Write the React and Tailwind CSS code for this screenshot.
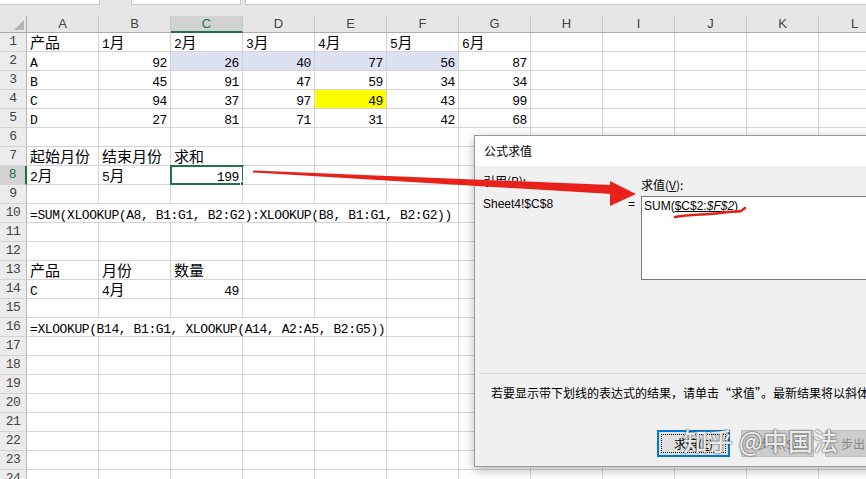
import React from 'react'

const COLS = ['A', 'B', 'C', 'D', 'E', 'F', 'G', 'H', 'I', 'J', 'K', 'L']

// span -> width class (72px per column)
const W = { 1: 'w-[72px]', 5: 'w-[360px]', 6: 'w-[432px]' }

const TONE = {
  blue: 'bg-[#dce2f1]',
  yellow: 'bg-[#ffff00]',
}

const n = (t, tone) => ({ t, r: true, tone })

const ROWS = {
  1: [{ t: '产品' }, { t: '1月' }, { t: '2月' }, { t: '3月' }, { t: '4月' }, { t: '5月' }, { t: '6月' }],
  2: [{ t: 'A' }, n('92'), n('26', 'blue'), n('40', 'blue'), n('77', 'blue'), n('56', 'blue'), n('87')],
  3: [{ t: 'B' }, n('45'), n('91'), n('47'), n('59'), n('34'), n('34')],
  4: [{ t: 'C' }, n('94'), n('37'), n('97'), n('49', 'yellow'), n('43'), n('99')],
  5: [{ t: 'D' }, n('27'), n('81'), n('71'), n('31'), n('42'), n('68')],
  7: [{ t: '起始月份' }, { t: '结束月份' }, { t: '求和' }],
  8: [{ t: '2月' }, { t: '5月' }, { t: '199', r: true, sel: true }],
  10: [{ t: '=SUM(XLOOKUP(A8, B1:G1, B2:G2):XLOOKUP(B8, B1:G1, B2:G2))', span: 6 }],
  13: [{ t: '产品' }, { t: '月份' }, { t: '数量' }],
  14: [{ t: 'C' }, { t: '4月' }, n('49')],
  16: [{ t: '=XLOOKUP(B14, B1:G1, XLOOKUP(A14, A2:A5, B2:G5))', span: 5 }],
}

// ascii runs get the narrow mono face, the rest stays CJK
function Txt({ s }) {
  const parts = s.split(/([\x00-\x7f]+)/).filter(Boolean)
  return parts.map((p, i) =>
    /^[\x00-\x7f]+$/.test(p) ? (
      <span key={i} className="font-['Liberation_Mono',monospace] text-[13px] tracking-[-0.4px]">
        {p}
      </span>
    ) : (
      <span key={i}>{p}</span>
    )
  )
}

function Cell({ c }) {
  const span = c.span || 1
  return (
    <div
      className={`relative shrink-0 h-full border-r border-b border-[#d4d4d4] leading-[18px] whitespace-nowrap px-[3px] ${W[span]} ${
        c.r ? 'text-right' : 'text-left'
      } ${c.tone ? TONE[c.tone] : 'bg-white'}`}
    >
      {c.t && <Txt s={c.t} />}
      {c.sel && (
        <div className="absolute -left-px -top-px w-[74px] h-[20px] border-2 border-[#217346]">
          <div className="absolute -right-[4px] -bottom-[4px] w-[6px] h-[6px] bg-[#217346] border border-white" />
        </div>
      )}
    </div>
  )
}

function Row({ num }) {
  const cells = ROWS[num] || []
  const used = cells.reduce((a, c) => a + (c.span || 1), 0)
  const rest = Array.from({ length: 12 - used })
  const active = num === 8
  return (
    <div className="flex h-[19px] shrink-0">
      <div
        className={`w-[27px] shrink-0 flex items-center justify-center border-b border-[#d4d4d4] font-['Liberation_Mono',monospace] text-[13px] tracking-[-0.5px] ${
          active
            ? 'bg-[#d2d2d2] border-r-2 border-r-[#217346] text-[#217346]'
            : 'bg-[#ececec] border-r border-r-[#b8b8b8] text-[#444]'
        }`}
      >
        {num}
      </div>
      {cells.map((c, i) => (
        <Cell key={i} c={c} />
      ))}
      {rest.map((_, i) => (
        <Cell key={'e' + i} c={{}} />
      ))}
    </div>
  )
}

function Sheet() {
  return (
    <div className="flex flex-col">
      <div className="h-[16px] bg-[#e6e6e6] flex items-start shrink-0">
        <div className="w-[100px] h-[5px] bg-white border-b border-r border-[#c6c6c6]" />
        <div className="w-[31px]" />
        <div className="w-[110px] h-[5px] bg-white border-b border-x border-[#c6c6c6]" />
        <div className="w-[4px]" />
        <div className="flex-1 h-[5px] bg-white border-b border-l border-[#c6c6c6]" />
      </div>
      <div className="flex h-[17px] shrink-0 font-['Liberation_Sans',sans-serif] text-[13px]">
        <div className="w-[27px] shrink-0 bg-[#e6e6e6] border-r border-b border-[#ababab] flex items-end justify-end p-[2px]">
          <svg width="10" height="10" viewBox="0 0 10 10">
            <polygon points="10,0 10,10 0,10" fill="#b4b4b4" />
          </svg>
        </div>
        {COLS.map((l) => (
          <div
            key={l}
            className={`w-[72px] shrink-0 flex items-center justify-center border-r border-[#c8c8c8] ${
              l === 'C'
                ? 'bg-[#d2d2d2] border-b-2 border-b-[#217346] text-[#217346]'
                : 'bg-[#e6e6e6] border-b border-b-[#ababab] text-[#444]'
            }`}
          >
            {l}
          </div>
        ))}
      </div>
      {Array.from({ length: 24 }, (_, i) => (
        <Row key={i} num={i + 1} />
      ))}
    </div>
  )
}

function Dialog() {
  return (
    <div className="absolute left-[474px] top-[135px] w-[420px] h-[332px] bg-[#f0f0f0] border border-[#9a9a9a] shadow-[0_3px_10px_rgba(0,0,0,0.28)] font-['Noto_Sans_CJK_SC',sans-serif] text-[12px] text-black flex flex-col">
      <div className="h-[30px] bg-white flex items-center pl-[9px] shrink-0">公式求值</div>
      <div className="flex pl-[8px] shrink-0">
        <div className="w-[145px] shrink-0 flex flex-col">
          <div className="mt-[7px] leading-[16px]">
            引用(<span className="underline">R</span>):
          </div>
          <div className="mt-[7px] leading-[16px] font-['Liberation_Sans',sans-serif]">Sheet4!$C$8</div>
        </div>
        <div className="w-[13px] shrink-0 mt-[30px] leading-[16px] font-['Liberation_Sans',sans-serif]">=</div>
        <div className="flex flex-col shrink-0">
          <div className="mt-[11px] leading-[16px]">
            求值(<span className="underline">V</span>):
          </div>
          <div className="mt-[3px] w-[260px] h-[84px] bg-white border border-[#7a7a7a] px-[2px] pt-[1px] leading-[16px] font-['Liberation_Sans',sans-serif]">
            SUM(<span className="underline">$C$2:</span>
            <span className="underline italic">$F$2</span>)
          </div>
        </div>
      </div>
      <div className="mt-[93px] ml-[6px] border-t border-[#d6d6d6] shrink-0" />
      <div className="mt-[11px] pl-[16px] leading-[16px] whitespace-nowrap shrink-0">
        若要显示带下划线的表达式的结果，请单击“求值”。最新结果将以斜体显示。
      </div>
      <div className="mt-[29px] pl-[182px] flex gap-[11px] shrink-0">
        <div className="relative shrink-0 w-[73px] h-[27px] bg-[#e1e1e1] border-2 border-[#0078d7] flex items-center justify-center">
          <span className="absolute inset-[2px] border border-dotted border-black" />
          求值(<span className="underline">E</span>)
        </div>
        <div className="shrink-0 w-[73px] h-[27px] bg-[#cccccc] border border-[#bfbfbf] flex items-center justify-center text-[#8a8a8a]">
          步入(S)
        </div>
        <div className="shrink-0 w-[73px] h-[27px] bg-[#cccccc] border border-[#bfbfbf] flex items-center justify-center text-[#8a8a8a]">
          步出(O)
        </div>
      </div>
    </div>
  )
}

export default function App() {
  return (
    <div className="relative w-[866px] h-[479px] overflow-hidden bg-white font-['Noto_Sans_CJK_SC',sans-serif] text-[15px] text-black">
      <Sheet />
      <Dialog />
      <svg className="absolute left-0 top-0 pointer-events-none" width="866" height="479" viewBox="0 0 866 479">
        {/* arrow from C8 to the evaluate box */}
        <polygon points="253,170.5 612,185 612,194 253,172.5" fill="#e8221b" />
        <polygon points="610,181 636,194 610,206" fill="#e8221b" />
        {/* hand-drawn underline under the result */}
        <path
          d="M675 217 C 690 214, 705 215, 720 213 S 738 212, 741 211 L 745 208"
          stroke="#e0241c"
          strokeWidth="2.5"
          fill="none"
          strokeLinecap="round"
        />
      </svg>
      <div className="absolute left-[683px] top-[423px] whitespace-nowrap font-['Noto_Sans_CJK_SC',sans-serif] font-medium text-[25px] leading-[34px] text-white/90 [text-shadow:0_0_2px_rgba(0,0,0,0.7),0_0_1px_rgba(0,0,0,0.5)]">
        知乎 @中国法
      </div>
    </div>
  )
}
